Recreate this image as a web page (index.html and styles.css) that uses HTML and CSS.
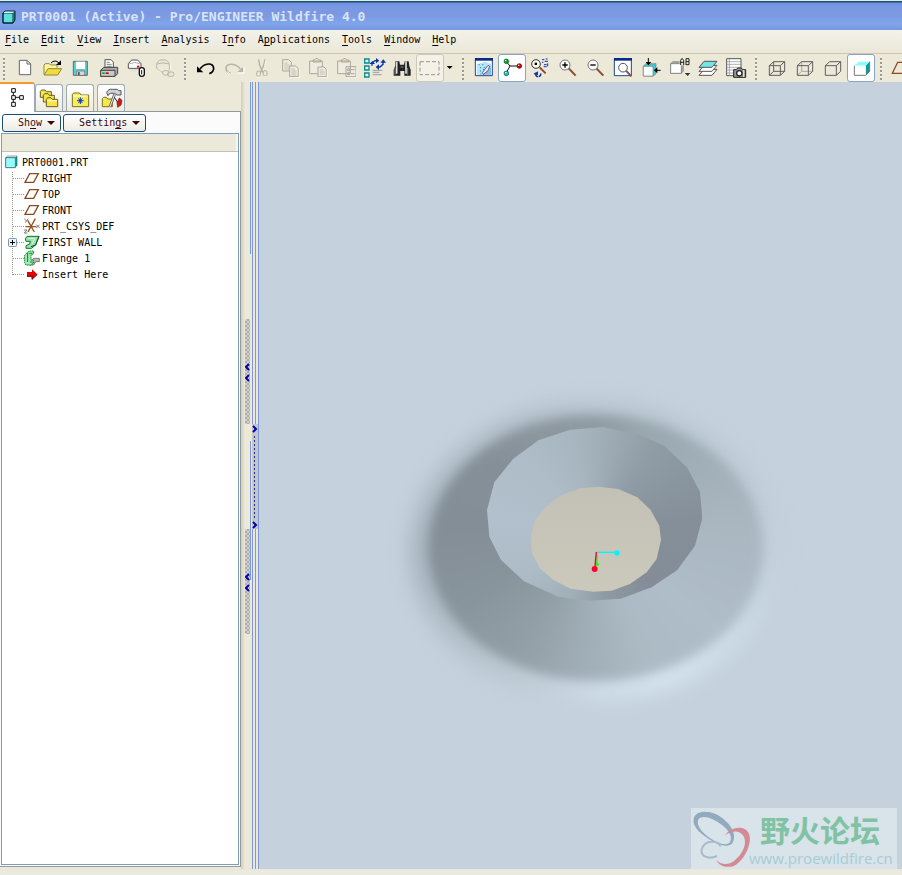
FILE: index.html
```
<!DOCTYPE html>
<html lang="en">
<head>
<meta charset="utf-8">
<title>PRT0001 (Active) - Pro/ENGINEER Wildfire 4.0</title>
<link rel="stylesheet" href="styles.css">
</head>
<body>
<div class="app">
<header class="titlebar">
<svg class="cube" viewBox="0 0 42 42" aria-hidden="true"><path d="M3 9h30v30H3z" fill="#5ce0e0" stroke="#063438" stroke-width="3"/><path d="M3 9l6-6h30l-6 6z" fill="#dffcff"/><path d="M33 9l6-6v27l-6 9z" fill="#1d7c80"/><path d="M3 39V9l6-6h30v27l-6 9z" fill="none" stroke="#042024" stroke-width="3"/></svg>
<h1>PRT0001 (Active) - Pro/ENGINEER Wildfire 4.0</h1>
</header>
<nav class="menubar">
<button><u>F</u>ile</button><button><u>E</u>dit</button><button><u>V</u>iew</button><button><u>I</u>nsert</button><button><u>A</u>nalysis</button><button>I<u>n</u>fo</button><button>A<u>p</u>plications</button><button><u>T</u>ools</button><button><u>W</u>indow</button><button><u>H</u>elp</button>
</nav>
<div class="toolbar" role="toolbar">
<span class="grip first"></span>
<button aria-label="New"><svg viewBox="33 162 84 84"><path d="M58 181h23l11 11v32H58z" fill="#fff" stroke="#666" stroke-width="3"/><path d="M81 181v11h11" fill="none" stroke="#666" stroke-width="3"/></svg></button>
<button aria-label="Open"><svg viewBox="117 162 84 84"><path d="M132 223v-28l4-4h12l4 4h19v8" fill="#fff7a0" stroke="#8f8736" stroke-width="3"/><path d="M132 225l12-19h41l-12 19z" fill="#f1dc3c" stroke="#8f8736" stroke-width="3"/><path d="M153 189q12-12 24 0" fill="none" stroke="#000" stroke-width="3"/><path d="M183 181v14h-15z"/></svg></button>
<button aria-label="Save"><svg viewBox="201 162 84 84"><path d="M220 184h42v42h-42z" fill="#58cfd2" stroke="#5d6b70" stroke-width="3"/><path d="M228 185h27v22h-27z" fill="#fff"/><path d="M230 213h24v13h-24z" fill="#d9d9d9" stroke="#666" stroke-width="2"/><path d="M234 216h5v9h-5z" fill="#555"/></svg></button>
<button aria-label="Print"><svg viewBox="285 162 84 84"><path d="M315 203v-24h18l7 7v17z" fill="#fff" stroke="#555" stroke-width="3"/><path d="M320 187h9m-9 6h15m-15 6h15" stroke="#444" stroke-width="2"/><path d="M302 211l9-9h42v19l-8 8h-43z" fill="#aaa" stroke="#444" stroke-width="3"/><path d="M302 211h43v18h-43z" fill="#c9c9c9" stroke="#444" stroke-width="3"/><path d="M307 217h7v5h-7z" fill="#0a0"/><path d="M317 217h9v5h-9z" fill="#d00"/></svg></button>
<button aria-label="Attach"><svg viewBox="369 162 84 84"><path d="M385 205v-14l10-11h18l10 11v14z" fill="#fff" stroke="#555" stroke-width="3"/><path d="M385 192q20-9 38 0" fill="none" stroke="#888" stroke-width="2"/><path d="M411 197h7v6h-7z" fill="#e00"/><path d="M386 208h31l-9 6h-14z" fill="#ddd"/><rect x="418" y="203" width="15" height="26" rx="7" fill="#fff" stroke="#111" stroke-width="4"/><path d="M425 210v13" stroke="#111" stroke-width="3"/></svg></button>
<button aria-label="Link" disabled><svg viewBox="453 162 84 84"><g fill="none" stroke="#bab6a7" stroke-width="3"><path d="M470 205v-15l9-10h19l10 10v22M470 192q19-7 38 0M470 205l12 11h6"/><rect x="488" y="212" width="19" height="13" rx="6"/><rect x="503" y="216" width="19" height="13" rx="6"/></g><path d="M473 210l12 11M511 190v20" stroke="#fff" stroke-width="2"/></svg></button>
<span class="grip"></span>
<button aria-label="Undo"><svg viewBox="36 12 84 84"><path d="M60 57C73 39 99 36 101 55q0 12-13 16" fill="none" stroke="#000" stroke-width="5"/><path d="M51 49v18h19z"/></svg></button>
<button aria-label="Redo" disabled><svg viewBox="120 12 84 84"><path d="M181 57C168 39 140 38 138 54q0 13 14 17" fill="none" stroke="#b9b6a8" stroke-width="5"/><path d="M190 50v17h-19z" fill="#b9b6a8"/><path d="M192 50v19h-20M142 66l10 7" fill="none" stroke="#fff" stroke-width="3"/></svg></button>
<button aria-label="Cut" disabled><svg viewBox="204 12 84 84"><path d="M236 28l3 18 10 22M255 28l-4 18-10 22" fill="none" stroke="#b3b0a1" stroke-width="4"/><rect x="230" y="63" width="11" height="16" rx="5" fill="none" stroke="#b3b0a1" stroke-width="3"/><rect x="250" y="62" width="11" height="16" rx="5" fill="none" stroke="#b3b0a1" stroke-width="3"/><path d="M232 81h7m13-1h8M258 30l-4 16" stroke="#fff" stroke-width="2"/></svg></button>
<button aria-label="Copy" disabled><svg viewBox="288 12 84 84"><g fill="#efede1" stroke="#aaa797" stroke-width="3"><path d="M308 29h18l8 8v26h-26z"/><path d="M329 48h18l8 8v24h-26z"/></g><path d="M313 39h10m-10 6h15m-15 6h14m-14 6h14m7 0h10m-10 6h16m-16 6h16m-16 6h16" stroke="#aaa797" stroke-width="2"/><path d="M330 83h28V57" fill="none" stroke="#fff" stroke-width="2"/></svg></button>
<button aria-label="Paste" disabled><svg viewBox="372 12 84 84"><g fill="#efede1" stroke="#aaa797" stroke-width="3"><path d="M389 33h38v38h-38zM399 36v-6h5l3-4h6l3 4h6v6z"/><path d="M414 51h18l7 7v22h-25z"/></g><path d="M419 60h11m-11 6h15m-15 6h15" stroke="#aaa797" stroke-width="2"/><path d="M415 83h27V58" fill="none" stroke="#fff" stroke-width="2"/></svg></button>
<button aria-label="Paste Special" disabled><svg viewBox="456 12 84 84"><g fill="#efede1" stroke="#aaa797" stroke-width="3"><path d="M473 33h38v38h-38zM483 36v-6h5l3-4h6l3 4h6v6zM498 50h30v30h-30z"/></g><path d="M503 56h6v6h-6zm0 12h6v6h-6zM513 59h11m-11 12h11" fill="none" stroke="#aaa797" stroke-width="3"/><path d="M499 83h31V51" fill="none" stroke="#fff" stroke-width="2"/></svg></button>
<button aria-label="Regenerate"><svg viewBox="540 12 84 84"><path d="M554 27h13v12h-13zM554 48h13v12h-13zM554 69h13v12h-13z" fill="#e8ffff" stroke="#078a91" stroke-width="4"/><path d="M576 47v-8l9-7h6M609 35v8l-9 8h-8" fill="none" stroke="#0832ae" stroke-width="4"/><path d="M588 24l10 8-10 8zM601 38h17l-8-10zM568 42h17l-8-9zM597 43l-10 8 10 9z" fill="#0832ae"/><path d="M578 61h29m-29 6h20m-20 7h27" stroke="#777" stroke-width="2"/></svg></button>
<button aria-label="Find"><svg viewBox="624 12 84 84"><path d="M646 34h12l2 10h12l2-10h12l2 14 4 12v17h-19V63h-12v14h-20V59l5-12z" fill="#222"/><path d="M650 35v36m28-37v37" stroke="#ddd" stroke-width="5"/><path d="M645 54v20m38-20v20M662 51h8" stroke="#888" stroke-width="3"/></svg></button>
<button aria-label="Select box" class="soft"><svg viewBox="708 12 84 84"><path d="M720 35h57v39h-57z" fill="none" stroke="#999789" stroke-width="3" stroke-dasharray="12 6"/></svg></button>
<button class="drop" aria-label="Selection options"><svg viewBox="792 12 36 84"><path d="M800 48h18l-9 9z"/></svg></button>
<span class="grip wide"></span>
<button aria-label="Repaint"><svg viewBox="30 12 84 84"><path d="M46 26h51v51H46z" fill="#fff" stroke="#1746a2" stroke-width="3"/><path d="M45 24h54v8H45z" fill="#062b8d"/><path d="M50 43l26-8 18 8-9 14-18 17H50z" fill="#b9e4f8"/><path d="M92 43l2 31-28 1 20-15z" fill="#8bb9e6"/><path d="M84 46l5 3-5 13-14 11-3-5z" fill="#eee" stroke="#225" stroke-width="2"/><path d="M56 44h3m8 0h3m-10 9h3m8 0h3m-14 10h3m6-5h3m-11 14h3" stroke="#08a" stroke-width="3"/></svg></button>
<button aria-label="Spin center" class="on"><svg viewBox="114 12 84 84"><path d="M140 36l10 12h25M150 48l-11 20" fill="none" stroke="#111" stroke-width="3"/><circle cx="139" cy="34" r="7" fill="#0a9b13" stroke="#064" stroke-width="2"/><circle cx="178" cy="48" r="7" fill="#d00000" stroke="#500" stroke-width="2"/><circle cx="139" cy="70" r="7" fill="#16c6c6" stroke="#044" stroke-width="2"/><path d="M135 30h4v4h-4zm39 14h4v4h-4zm-39 22h4v4h-4z" fill="#fff"/></svg></button>
<button aria-label="Orient mode"><svg viewBox="198 12 84 84"><circle cx="228" cy="42" r="13" fill="#faf8ee" stroke="#333" stroke-width="3"/><path d="M224 38h7v7h-7z"/><path d="M239 52l18 18" stroke="#8b4a2f" stroke-width="6"/><path d="M246 29h7m4-2h6m-17 10h4m4-3h10M252 44h8m-9 6h9m3-10v9" fill="none" stroke="#1333b4" stroke-width="3"/><path d="M226 68q0 10 8 13M242 70q2 7-6 10" fill="none" stroke="#1333b4" stroke-width="4"/><path d="M220 72l14-8v12z" fill="#1333b4"/></svg></button>
<button aria-label="Zoom in"><svg viewBox="282 12 84 84"><path d="M325 54l22 23" stroke="#8b5138" stroke-width="6"/><circle cx="315" cy="45" r="15" fill="#fafafa" stroke="#777" stroke-width="3"/><path d="M307 45h16m-8-8v16" stroke="#000" stroke-width="4"/></svg></button>
<button aria-label="Zoom out"><svg viewBox="366 12 84 84"><path d="M408 54l22 23" stroke="#8b5138" stroke-width="6"/><circle cx="399" cy="45" r="15" fill="#fafafa" stroke="#777" stroke-width="3"/><path d="M391 45h16" stroke="#000" stroke-width="4"/></svg></button>
<button aria-label="Refit"><svg viewBox="450 12 84 84"><path d="M463 26h51v51h-51z" fill="#fff" stroke="#1746a2" stroke-width="3"/><path d="M462 24h54v8h-54z" fill="#062b8d"/><path d="M498 62l16 17" stroke="#8b5138" stroke-width="6"/><circle cx="489" cy="53" r="13" fill="#fff" stroke="#555" stroke-width="3"/></svg></button>
<button aria-label="Reorient"><svg viewBox="534 12 84 84"><path d="M550 48l8-7h30v30l-8 7h-30z" fill="#3ccbd0" stroke="#777" stroke-width="2"/><path d="M550 49h29v29h-29z" fill="#f8ffff" stroke="#777" stroke-width="2"/><path d="M565 24v19m37 18h-18" stroke="#000" stroke-width="3"/><path d="M557 36h17l-9 10zM592 52v18l-10-9z"/></svg></button>
<button aria-label="Saved views"><svg viewBox="618 12 84 84"><path d="M632 41l6-6h32v28l-6 7h-32z" fill="#aaa" stroke="#777" stroke-width="2"/><path d="M632 41h32v29h-32z" fill="#fff" stroke="#888" stroke-width="3"/><path d="M659 24h14v22h-14z" fill="#ece9d8"/><path d="M662 45V31l4-6 5 6v14m-9-8h9M678 45V26h9v18h-9m0-9h9" fill="none" stroke="#222" stroke-width="3"/><path d="M674 69h17l-8 9z" fill="#333"/></svg></button>
<button aria-label="Layers"><svg viewBox="702 12 84 84"><g stroke="#555" stroke-width="3"><path d="M717 76l15-18h39l-15 18z" fill="#fff"/><path d="M717 64l15-18h39l-15 18z" fill="#fff"/><path d="M717 52l15-18h39l-15 18z" fill="#75e5e8"/></g></svg></button>
<button aria-label="View manager"><svg viewBox="786 12 84 84"><path d="M800 26h43v51h-43z" fill="#fff" stroke="#555" stroke-width="3"/><path d="M808 26v51M800 35h43m-43 8h43m-43 9h43m-43 8h43m-43 9h43" stroke="#888" stroke-width="2"/><path d="M821 59h8l4-5h11l4 5h9v23h-36z" fill="#999" stroke="#222" stroke-width="3"/><circle cx="838" cy="70" r="8" fill="#fff" stroke="#222" stroke-width="4"/><path d="M851 60v21" stroke="#eee" stroke-width="3"/></svg></button>
<span class="grip"></span>
<button aria-label="Wireframe"><svg viewBox="69 162 84 84"><path d="M88 197h33v29H88zM101 185h33v29h-33zM88 197l13-12m20 12l13-12m-13 41l13-12m-46 12l13-12" fill="none" stroke="#5e5e5e" stroke-width="3"/></svg></button>
<button aria-label="Hidden line"><svg viewBox="153 162 84 84"><path d="M185 185v29h33m-46 12l13-12" fill="none" stroke="#aaa" stroke-width="3"/><path d="M172 197h33v29h-33zl13-12h33v29l-13 12M205 197l13-12" fill="none" stroke="#5e5e5e" stroke-width="3"/></svg></button>
<button aria-label="No hidden"><svg viewBox="237 162 84 84"><path d="M256 197h33v29h-33zl13-12h33v29l-13 12M289 197l13-12" fill="none" stroke="#5e5e5e" stroke-width="3"/></svg></button>
<button aria-label="Shading" class="on"><svg viewBox="321 162 84 84"><path d="M343 197l13-12h33l-12 12z" fill="#87ffff"/><path d="M377 197l12-12v29l-12 12z" fill="#14969c"/><path d="M343 197h34v29h-34z" fill="#fff"/><path d="M343 197v29h34l12-12v-29" fill="none" stroke="#777" stroke-width="3"/></svg></button>
<span class="grip"></span>
<button aria-label="Datum planes"><svg viewBox="444 162 84 84"><path d="M457 220l16-33h33l-16 33z" fill="none" stroke="#8b4a24" stroke-width="4"/></svg></button>
</div>
<main class="work">
<section class="side">
<div class="tabs" role="tablist">
<button role="tab" class="active" aria-label="Model tree"><svg width="34" height="28" viewBox="0 9 102 84"><path d="M35 23h11v11H35zm0 21h11v11H35zm0 20h11v12H35zM59 44h11v11H59zM40 34v10m0 11v9M46 49h13" fill="#fff" stroke="#111" stroke-width="3"/></svg></button>
<button role="tab" aria-label="Folder browser"><svg width="26" height="26" viewBox="108 15 78 78"><g fill="#f8e545" stroke="#66602a" stroke-width="3"><path d="M121 52V34l4-4h10l4 5h15v17z"/><path d="M130 66V46l4-5h10l4 5h15v20z"/><path d="M139 80V58l4-5h10l4 5h16v22z"/></g><path d="M142 62h28" stroke="#fffbc0" stroke-width="4"/></svg></button>
<button role="tab" aria-label="Favorites"><svg width="26" height="26" viewBox="201 15 78 78"><path d="M217 80V43l4-4h18l4 6h23v35z" fill="#f7ed55" stroke="#77702c" stroke-width="3"/><path d="M220 48h43" stroke="#fffcc8" stroke-width="4"/><path d="M241 52v20m-10-10h20m-16-7l12 14m0-14l-12 14" stroke="#0832cc" stroke-width="3"/></svg></button>
<button role="tab" aria-label="Connections"><svg width="26" height="26" viewBox="297 15 78 78"><path d="M310 80V56l4-4h8l4 5h14v23z" fill="#f7e747" stroke="#77702c" stroke-width="3"/><path d="M347 43l-14 37" stroke="#666" stroke-width="8"/><path d="M347 43l-14 37" stroke="#eee" stroke-width="3"/><path d="M323 38q4-12 18-10h14l4 4h7v13h-12l-7-5h-12q-6 0-8 7z" fill="#ccd4d5" stroke="#555" stroke-width="3"/><path d="M346 52l10 15" stroke="#222" stroke-width="3"/><path d="M354 68l7-14 8 7-3 14-10 7z" fill="#d31818" stroke="#611" stroke-width="2"/></svg></button>
</div>
<div class="panel">
<div class="actions"><button><span>Sh<u>o</u>w</span><i class="caret"></i></button><button><span>Settin<u>g</u>s</span><i class="caret"></i></button></div>
<div class="tree">
<div class="treehead"></div>
<ul>
<li class="root"><svg width="14" height="16" viewBox="15 222 42 48"><path d="M17 233l6-5h28l-5 5z" fill="#e5ffff" stroke="#666" stroke-width="2"/><path d="M46 233l6-5v28l-6 7z" fill="#10868c"/><path d="M17 233h29v30H17z" fill="#94ffff" stroke="#4f777a" stroke-width="3"/></svg><span>PRT0001.PRT</span></li>
<li><svg class="twig" viewBox="0 0 22 16"><path d="M10.500 2v14M11 8.500h11"/></svg><svg class="ico" viewBox="72 270 48 48"><path d="M75 307l14-26h26l-14 26z" fill="#fff" stroke="#8b4a24" stroke-width="4"/></svg><span>RIGHT</span></li>
<li><svg class="twig" viewBox="0 0 22 16"><path d="M10.500 0v16M11 8.500h11"/></svg><svg class="ico" viewBox="72 270 48 48"><path d="M75 307l14-26h26l-14 26z" fill="#fff" stroke="#8b4a24" stroke-width="4"/></svg><span>TOP</span></li>
<li><svg class="twig" viewBox="0 0 22 16"><path d="M10.500 0v16M11 8.500h11"/></svg><svg class="ico" viewBox="72 270 48 48"><path d="M75 307l14-26h26l-14 26z" fill="#fff" stroke="#8b4a24" stroke-width="4"/></svg><span>FRONT</span></li>
<li><svg class="twig" viewBox="0 0 22 16"><path d="M10.500 0v16M11 8.500h11"/></svg><svg class="ico" viewBox="72 414 48 48"><path d="M76 440h33M83 421l20 35M106 416L84 456" stroke="#95521f" stroke-width="4"/><path d="M73 416l5 6m6-6l-8 12M109 434l10 10m0-10l-10 10M72 450h9l-8 9h9" fill="none" stroke="#777" stroke-width="3"/></svg><span>PRT_CSYS_DEF</span></li>
<li><svg class="twig" viewBox="0 0 22 16"><path d="M10.500 0v16M11 8.500h11"/><rect class="box" x="6.500" y="4.500" width="8" height="8" rx="1"/><path class="plus" d="M8 8.500h5M10.500 6v5"/></svg><svg class="ico" viewBox="72 462 48 48"><path d="M76 476l5-7h36l-11 27-12 9H78v-8l11-5 2-8H78z" fill="#9fdfae" stroke="#08782c" stroke-width="3"/><path d="M93 500l14-5 10-26" fill="none" stroke="#00551c" stroke-width="3"/><path d="M85 475h19l-7 16" fill="none" stroke="#d9fbe0" stroke-width="3"/></svg><span>FIRST WALL</span></li>
<li><svg class="twig" viewBox="0 0 22 16"><path d="M10.500 0v16M11 8.500h11"/></svg><svg class="ico" viewBox="72 510 48 48"><path d="M94 543l7-8h17v10h-11l-6 10H88z" fill="#bbb" stroke="#777" stroke-width="3"/><path d="M82 517l8-4h11v8l-8 5v14l8 1v8l-9 6H78l-4-7v-22z" fill="#a4ebb4" stroke="#078128" stroke-width="3" stroke-dasharray="5 2"/><path d="M83 519v27m5-26h9m-7 26h8" stroke="#078128" stroke-width="3"/></svg><span>Flange 1</span></li>
<li><svg class="twig" viewBox="0 0 22 16"><path d="M10.500 0v9M11 8.500h11"/></svg><svg class="ico" viewBox="72 558 48 48"><path d="M81 576h15v-8l16 15-16 15v-9H81z" fill="#e60000"/><path d="M81 589h15v9l16-15" fill="none" stroke="#500" stroke-width="3"/></svg><span>Insert Here</span></li>
</ul>
</div>
</div>
</section>
<div class="split" aria-hidden="true">
<span class="short"></span><span class="rail a"></span><span class="rail b"></span><span class="rail c"></span>
<span class="handle top"><svg viewBox="0 0 5 105"><path d="M4 45L1 48l3 3M4 56l-3 3 3 3"/></svg></span>
<span class="handle low"><svg viewBox="0 0 5 105"><path d="M4 45L1 48l3 3M4 56l-3 3 3 3"/></svg></span>
<span class="short mid"></span>
<span class="sash"><svg viewBox="0 0 6 105"><path d="M1 2l3 3-3 3M1 98l3 3-3 3"/><path class="dots" d="M2.500 12v82"/></svg></span>
</div>
<section class="view">
<svg class="scene" viewBox="259 82 643 787" preserveAspectRatio="xMidYMid slice" role="img" aria-label="Shaded part">
<defs>
<clipPath id="hole"><path d="M570 149L670 141 775 163 853 198 922 263 960 335 967 415 945 497 892 570 815 622 722 656 630 662 535 650 432 604 363 540 328 470 321 390 343 307 400 236 475 181z"/></clipPath>
<linearGradient id="floor" x2="0" y2="1"><stop stop-color="#c3c0b5"/><stop offset="1" stop-color="#cbc8bc"/></linearGradient>
</defs>
<g transform="translate(380 380) scale(.333333)">
<foreignObject x="-100" y="-100" width="1500" height="1260"><div class="space"><div class="halo"></div><div class="cone"></div></div></foreignObject>
<g clip-path="url(#hole)"><foreignObject x="320" y="140" width="650" height="524"><div class="bore"></div></foreignObject></g>
<path d="M600 325L655 320 715 327 772 352 812 390 838 437 843 480 830 537 800 577 750 612 695 632 640 635 572 626 520 600 480 565 456 520 452 470 463 425 497 380 545 345z" fill="url(#floor)"/>
<path d="M650 517h60" stroke="#00f6ff" stroke-width="4"/><circle cx="711" cy="519" r="8" fill="#00f6ff"/>
<path d="M651 524v28" stroke="#1eff00" stroke-width="4"/><circle cx="652" cy="553" r="5" fill="#1eff00"/>
<path d="M649 516l-4 44" stroke="#f1002e" stroke-width="4"/><circle cx="644" cy="567" r="9" fill="#ff0033"/>
</g>
</svg>
<div class="mark">
<svg viewBox="33 39 180 183" aria-hidden="true"><path fill-rule="evenodd" fill="#91aabd" d="M41 72C46 42 102 42 137 78c24 22 32 48 20 67-12 13-35 6-56-5C65 121 36 96 41 72zm13 4c-5 21 19 44 45 59 20 12 42 18 51 7 9-18-4-35-23-51C97 67 62 57 54 76z"/><path fill-rule="evenodd" fill="#d48a94" d="M135 121c15-25 58-33 71-7 13 28-11 78-38 95-20 12-49 8-59-15 14 17 37 16 54 3 26-20 40-54 27-75-12-18-37-15-55-1z"/><path d="M122 154c-10-20-45-18-55 4-11 25 17 37 44 25" fill="none" stroke="#a9bac9" stroke-width="6"/></svg>
<div class="words"><strong lang="zh">野火论坛</strong><span>www.proewildfire.cn</span></div>
</div>
</section>
</main>
<footer class="status"></footer>
</div>
</body>
</html>
```
FILE: styles.css
```
* { box-sizing: border-box; }
html, body { height: 100%; margin: 0; }
body {
  background: #ece9d8;
  color: #000;
  font: 10px/16px "DejaVu Sans Mono", "Liberation Mono", "Noto Sans CJK SC", monospace;
  overflow: hidden;
}
button { font: inherit; color: inherit; background: none; border: 0; padding: 0; margin: 0; }
svg { display: block; }
.app { display: flex; flex-direction: column; height: 100%; }

.titlebar {
  flex: none;
  display: flex;
  align-items: center;
  gap: 5px;
  height: 30px;
  padding: 2px 2px 0;
  border-top: 1px solid #d9efeb;
  background: linear-gradient(#244d68 0 1px, #6b92e0 2px, #7b98e4 6px, #7c98e0 13px, #80a4ea 23px, #7897e2 29px);
}
.titlebar .cube { width: 14px; height: 14px; }
.titlebar h1 { margin: 0; font-size: 13px; line-height: 16px; font-weight: bold; color: #d8e4f8; white-space: nowrap; }

.menubar {
  flex: none;
  display: flex;
  align-items: flex-start;
  gap: 12px;
  height: 24px;
  padding: 2px 5px;
  border-bottom: 1px solid #cbc7b8;
  background: linear-gradient(#f3f2e9, #eeecdf 60%, #eae7d7);
}
u { text-underline-offset: 2px; }

.toolbar { flex: none; display: flex; height: 28px; overflow: hidden; background: #ece9d8; }
.toolbar button { flex: none; width: 28px; height: 28px; border: 1px solid transparent; border-radius: 3px; }
.toolbar button svg { width: 28px; height: 28px; margin: -1px; }
.toolbar .drop { width: 12px; }
.toolbar .drop svg { width: 12px; }
.toolbar .on { background: #fff; border-color: #86a5c0; }
.toolbar .soft { border-color: #ccc9b9; background: #f4f2e8; }
.grip {
  flex: none;
  width: 13px;
  background: repeating-linear-gradient(#9a9992 0 2px, #f6f5ee 2px 3px, #ece9d8 3px 4px);
  background-clip: content-box;
  padding: 2px 6px 2px 5px;
}
.grip.first { width: 11px; padding: 2px 6px 2px 3px; }
.grip.wide { width: 14px; padding: 2px 6px; }

.work { flex: 1; min-height: 0; display: flex; }
.side { flex: none; width: 241px; display: flex; flex-direction: column; }
.tabs { flex: none; display: flex; align-items: flex-end; gap: 3px; height: 29px; }
.tabs button {
  width: 28px;
  height: 27px;
  border: 1px solid #9caab5;
  border-bottom: 0;
  border-radius: 3px 3px 0 0;
  background: linear-gradient(#fff, #edebdf);
}
.tabs .active {
  width: 35px;
  height: 30px;
  margin: 0 -3px -1px 0;
  z-index: 1;
  border: 0;
  border-top: 2px solid #ef9b29;
  border-right: 1px solid #9caab5;
  border-radius: 0 3px 0 0;
  background: #fff;
}
.panel {
  flex: 1;
  min-height: 0;
  display: flex;
  flex-direction: column;
  gap: 1px;
  margin-bottom: 2px;
  padding: 2px 1px 1px;
  border: 1px solid #919b9c;
  border-left: 0;
  background: #fbfbfc;
}
.actions { display: flex; gap: 2px; padding-left: 1px; }
.actions button {
  display: flex;
  align-items: center;
  gap: 5px;
  height: 18px;
  padding: 0 5px 0 15px;
  border: 1px solid #174f7c;
  border-radius: 3px;
  background: linear-gradient(#fff, #edebe2);
  color: #3a0710;
}
.caret { border: solid transparent; border-width: 4px 4px 0; border-top-color: #3a0710; }
.tree { flex: 1; min-height: 0; border: 1px solid #7f9db9; background: #fff; }
.treehead { height: 18px; background: #ebe9da; border-bottom: 1px solid #c4c1b2; box-shadow: inset -2px 0 #f8f7ef; }
.tree ul { list-style: none; margin: 0; padding: 2px 0 0; }
.tree li { display: flex; gap: 2px; height: 16px; line-height: 18px; }
.tree .root { padding-left: 3px; gap: 3px; }
.tree .twig { width: 22px; height: 16px; margin-right: -2px; fill: none; stroke: #9c9a89; stroke-dasharray: 1 1; }
.tree .ico { width: 16px; height: 16px; }
.twig .box { fill: #edf4f8; stroke: #7b94ad; stroke-dasharray: none; }
.twig .plus { stroke: #000; stroke-dasharray: none; }

.split { flex: none; position: relative; width: 18px; background: linear-gradient(90deg, #d1cebd, #ece9d8 4px); }
.split > span { position: absolute; }
.rail { top: 0; bottom: 0; width: 1px; background: #7c98e0; }
.a { left: 11px; }
.b { left: 14px; }
.c { left: 17px; }
.short { left: 9px; top: 0; width: 1px; height: 172px; background: #7c98e0; }
.mid { top: 359px; height: 139px; }
.handle { left: 4px; width: 5px; height: 105px; background: repeating-conic-gradient(#aaa 0 25%, #d4d3cf 0 50%) 0 0 / 4px 4px; }
.top { top: 237px; }
.low { top: 447px; }
.sash { left: 11px; top: 342px; width: 6px; height: 105px; background: #c6c6c4; }
.split path { fill: none; stroke: #0000b4; stroke-width: 2; }
.split .dots { stroke: #222b91; stroke-width: 1; stroke-dasharray: 2 2; }

.view { flex: 1; min-width: 0; position: relative; overflow: hidden; background: #c5d2dd; }
.scene { width: 100%; height: 100%; }
.space { position: relative; width: 1500px; height: 1260px; }
.halo, .cone { position: absolute; border-radius: 50%; }
.halo {
  left: 190px;
  top: 165px;
  width: 1110px;
  height: 900px;
  filter: blur(30px);
  background: conic-gradient(#b4c2cc, #bccad4 60deg, #c2d0db 90deg, #cbdbe5 120deg, #d5e4ef 150deg, #cddbe7 180deg, #bdcad3 210deg, #b0bdc6 240deg, #a6b3bd 270deg, #abb8c1 300deg, #adbac4 330deg, #b4c2cc);
}
.cone {
  left: 245px;
  top: 204px;
  width: 1005px;
  height: 800px;
  filter: blur(16px);
  background: conic-gradient(at 50% 43%, #8e9ba2, #98a6ae 25deg, #a1afb8 60deg, #aab7c1 90deg, #afbdc8 130deg, #abbac3 160deg, #a0aeb7 185deg, #93a0a8 210deg, #89959d 240deg, #838e97 270deg, #858f98 300deg, #8b969d 330deg, #8e9ba2);
}
.bore {
  width: 650px;
  height: 524px;
  background: conic-gradient(at 50% 62%, #a2b0b9, #8f9ca5 35deg, #848f99 80deg, #848d97 130deg, #8e9aa3 170deg, #a0aeb8 200deg, #adbbc6 240deg, #b1c0cc 280deg, #aebcc7 320deg, #a6b5be 350deg, #a2b0b9);
}
.mark {
  position: absolute;
  right: 5px;
  bottom: 0;
  display: flex;
  width: 206px;
  height: 61px;
  background: #d8e3ea;
}
.mark svg { flex: none; width: 60px; height: 61px; }
.words { margin-left: -2px; color: #a7cdd3; white-space: nowrap; }
.words strong { display: block; padding-left: 11px; font: bold 30px/42px "Noto Sans CJK SC", sans-serif; color: #80c2a3; }
.words span { display: block; font: 15px/16px "Open Sans", sans-serif; }
.status { flex: none; height: 6px; background: #ebeae0; border-top: 1px solid #ede6d3; }
```
